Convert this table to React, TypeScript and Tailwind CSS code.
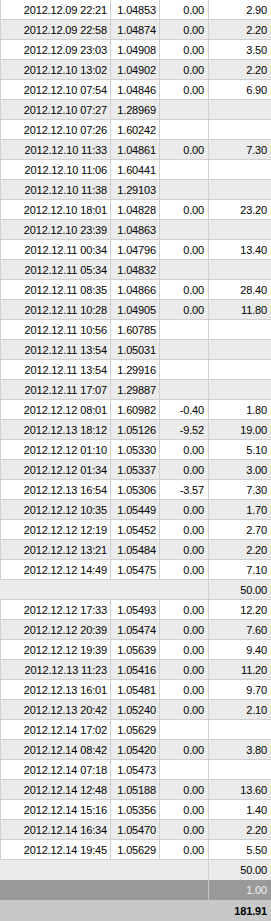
const rows: [string, string, string, string][] = [
  ["2012.12.09 22:21", "1.04853", "0.00", "2.90"],
  ["2012.12.09 22:58", "1.04874", "0.00", "2.20"],
  ["2012.12.09 23:03", "1.04908", "0.00", "3.50"],
  ["2012.12.10 13:02", "1.04902", "0.00", "2.20"],
  ["2012.12.10 07:54", "1.04846", "0.00", "6.90"],
  ["2012.12.10 07:27", "1.28969", "", ""],
  ["2012.12.10 07:26", "1.60242", "", ""],
  ["2012.12.10 11:33", "1.04861", "0.00", "7.30"],
  ["2012.12.10 11:06", "1.60441", "", ""],
  ["2012.12.10 11:38", "1.29103", "", ""],
  ["2012.12.10 18:01", "1.04828", "0.00", "23.20"],
  ["2012.12.10 23:39", "1.04863", "", ""],
  ["2012.12.11 00:34", "1.04796", "0.00", "13.40"],
  ["2012.12.11 05:34", "1.04832", "", ""],
  ["2012.12.11 08:35", "1.04866", "0.00", "28.40"],
  ["2012.12.11 10:28", "1.04905", "0.00", "11.80"],
  ["2012.12.11 10:56", "1.60785", "", ""],
  ["2012.12.11 13:54", "1.05031", "", ""],
  ["2012.12.11 13:54", "1.29916", "", ""],
  ["2012.12.11 17:07", "1.29887", "", ""],
  ["2012.12.12 08:01", "1.60982", "-0.40", "1.80"],
  ["2012.12.13 18:12", "1.05126", "-9.52", "19.00"],
  ["2012.12.12 01:10", "1.05330", "0.00", "5.10"],
  ["2012.12.12 01:34", "1.05337", "0.00", "3.00"],
  ["2012.12.13 16:54", "1.05306", "-3.57", "7.30"],
  ["2012.12.12 10:35", "1.05449", "0.00", "1.70"],
  ["2012.12.12 12:19", "1.05452", "0.00", "2.70"],
  ["2012.12.12 13:21", "1.05484", "0.00", "2.20"],
  ["2012.12.12 14:49", "1.05475", "0.00", "7.10"],
  ["", "", "", "50.00"],
  ["2012.12.12 17:33", "1.05493", "0.00", "12.20"],
  ["2012.12.12 20:39", "1.05474", "0.00", "7.60"],
  ["2012.12.12 19:39", "1.05639", "0.00", "9.40"],
  ["2012.12.13 11:23", "1.05416", "0.00", "11.20"],
  ["2012.12.13 16:01", "1.05481", "0.00", "9.70"],
  ["2012.12.13 20:42", "1.05240", "0.00", "2.10"],
  ["2012.12.14 17:02", "1.05629", "", ""],
  ["2012.12.14 08:42", "1.05420", "0.00", "3.80"],
  ["2012.12.14 07:18", "1.05473", "", ""],
  ["2012.12.14 12:48", "1.05188", "0.00", "13.60"],
  ["2012.12.14 15:16", "1.05356", "0.00", "1.40"],
  ["2012.12.14 16:34", "1.05470", "0.00", "2.20"],
  ["2012.12.14 19:45", "1.05629", "0.00", "5.50"],
];

// 普通交易行
function TradeRow({ r, odd }: { r: [string, string, string, string]; odd: boolean }) {
  // 合并的小计行（只有最后一列有值）
  if (!r[0]) {
    return (
      <div className="flex h-5 border-b border-[#d0d0d0] bg-[#ebebeb] leading-[21px]">
        <div className="w-[209px] border-r border-[#d0d0d0]" />
        <div className="flex-1 text-right pr-[4px]">{r[3]}</div>
      </div>
    );
  }
  return (
    <div className={`flex h-5 border-b border-[#d0d0d0] leading-[21px] ${odd ? "bg-[#ebebeb]" : "bg-white"}`}>
      <div className="w-[111px] border-l border-r border-[#d0d0d0] text-right pr-[3px]">{r[0]}</div>
      <div className="w-[49px] border-r border-[#d0d0d0] text-right pr-[3px]">{r[1]}</div>
      <div className="w-[49px] border-r border-[#d0d0d0] text-right pr-[4px]">{r[2]}</div>
      <div className="flex-1 text-right pr-[4px]">{r[3]}</div>
    </div>
  );
}

export default function App() {
  return (
    <div className="w-[271px] bg-white text-[11px] tracking-[-0.15px] text-black font-['Liberation_Sans',Arial,sans-serif]">
      {rows.map((r, i) => (
        <TradeRow key={i} r={r} odd={i % 2 === 1} />
      ))}
      {/* 底部汇总 */}
      <div className="flex h-5 bg-[#ebebeb] leading-[21px]">
        <div className="w-[209px] border-r border-[#d0d0d0]" />
        <div className="flex-1 text-right pr-[4px]">50.00</div>
      </div>
      <div className="flex h-5 bg-[#999999] text-[#f2f2f2] leading-[21px]">
        <div className="w-[209px] border-r border-[#c4c4c4]" />
        <div className="flex-1 text-right pr-[4px]">1.00</div>
      </div>
      <div className="flex h-[21px] bg-[#c8c8c8] font-bold leading-[22px]">
        <div className="flex-1 text-right pr-[4px]">181.91</div>
      </div>
    </div>
  );
}
